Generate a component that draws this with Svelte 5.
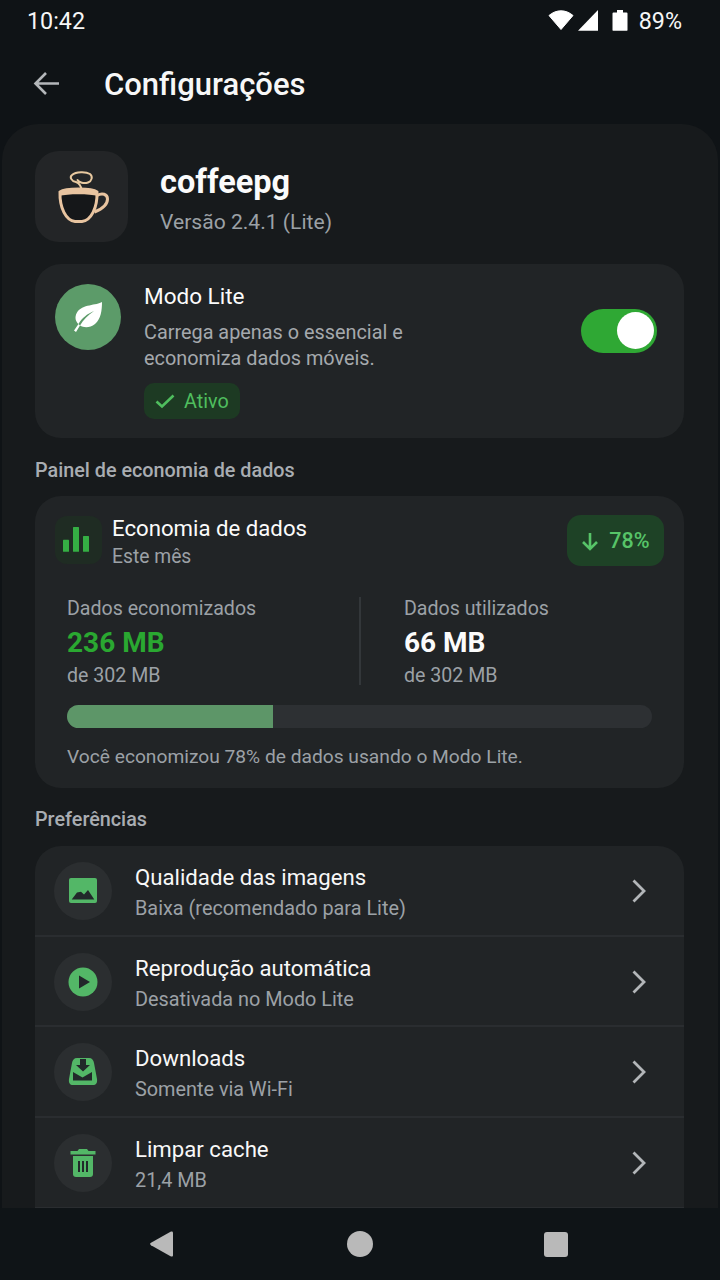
<script>
  const prefs = [
    { title: 'Qualidade das imagens', sub: 'Baixa (recomendado para Lite)', icon: 'image' },
    { title: 'Reprodução automática', sub: 'Desativada no Modo Lite', icon: 'play' },
    { title: 'Downloads', sub: 'Somente via Wi-Fi', icon: 'download' },
    { title: 'Limpar cache', sub: '21,4 MB', icon: 'trash' }
  ];
</script>

<div class="screen">
  <div class="status">
    <span class="time">10:42</span>
    <div class="status-right">
      <svg class="wifi" width="26" height="22" viewBox="0 1 26 22"><path d="M1 6.500C4.500 3.500 8.500 1.800 13 1.800S21.500 3.500 25 6.500L13 20.500Z" fill="#fff" stroke="#fff" stroke-linejoin="round"/></svg>
      <svg class="signal" width="22" height="22" viewBox="0 0 22 22"><path d="M21 0V20.700H1Z" fill="#fff"/></svg>
      <svg class="battery" width="16" height="22" viewBox="0 0 16 22"><path d="M5 0H11V2.500H14.500A1 1 0 0 1 15.500 3.500V20.200A.6.6 0 0 1 15 20.700H1A.6.6 0 0 1 .5 20.200V3.500A1 1 0 0 1 1.500 2.500H5Z" fill="#fff"/></svg>
      <span class="pct">89%</span>
    </div>
  </div>

  <header class="appbar">
    <svg width="28" height="28" viewBox="0 0 28 28" fill="none" stroke="#b4b7ba" stroke-width="2.600"><path d="M26 14.500H3M13 4 2.500 14.500 13 25"/></svg>
    <h1>Configurações</h1>
  </header>

  <main class="sheet">
    <section class="identity">
      <div class="tile">
        <svg width="60" height="60" viewBox="0 0 60 60" fill="none">
          <path d="M30 24C29 18 27 16 24 15C19 14 17.500 10 20 8C24 4.500 34 4.500 38 7C41 9.500 40 14 36 15.500C32 17 27 15.500 25.500 13" stroke="#e8c9a0" stroke-width="2" stroke-linecap="round"/>
          <path d="M8 25C11 22.800 19 22 27 22C35 22 42 22.800 45 25C45.500 41 39 53.500 30 54.500H23C14 53.500 7.500 41 8 25Z" fill="#151719" stroke="#e8c4a0" stroke-width="3"/>
          <path d="M7 25C10 22 19 21.500 27 21.500C35 21.500 43 22 46 25L45.500 29C38 26.800 15 26.800 7.500 29Z" fill="#e8c4a0"/>
          <path d="M45 28.500C50 25.500 55.500 27 55.500 32C55.500 38 49 42.500 42.500 45" stroke="#e8c4a0" stroke-width="3"/>
        </svg>
      </div>
      <div class="id-text">
        <div class="app-name">coffeepg</div>
        <div class="version">Versão 2.4.1 (Lite)</div>
      </div>
    </section>

    <section class="card lite">
      <div class="leaf">
        <svg width="36" height="36" viewBox="0 0 36 36"><path d="M32 3C27 6.500 12 5 7 13.500C4 18.500 6 23 8.500 25C12 19 17 15 24 12C18 16 13 21 10 26.500C14 29 20 29 25 25C31 20 32 11 32 3ZM8.500 25 4 31.500 6 33 10 26.500Z" fill="#fff"/></svg>
      </div>
      <div class="lite-text">
        <div class="card-title">Modo Lite</div>
        <p>Carrega apenas o essencial e<br />economiza dados móveis.</p>
        <div class="active">
          <svg width="20" height="20" viewBox="0 0 20 20" fill="none" stroke="#4fbe5e" stroke-width="2.600"><path d="M1.500 10.500 7 15.500 18.500 4.500"/></svg>
          <span>Ativo</span>
        </div>
      </div>
      <div class="switch"><span class="knob"></span></div>
    </section>

    <h2>Painel de economia de dados</h2>

    <section class="card savings">
      <div class="sv-head">
        <div class="bars">
          <svg width="26" height="28" viewBox="0 0 26 28" fill="#35ae44"><rect x="0" y="13.700" width="6" height="12" rx=".5"/><rect x="10" y="1" width="6" height="24.700" rx=".5"/><rect x="20" y="10" width="6" height="15.700" rx=".5"/></svg>
        </div>
        <div class="sv-title">
          <div class="card-title econ">Economia de dados</div>
          <div class="small">Este mês</div>
        </div>
        <div class="saved-badge">
          <svg width="18" height="20" viewBox="0 0 18 20" fill="none" stroke="#57c468" stroke-width="2.600"><path d="M9 2V18M2 11 9 18 16 11"/></svg>
          <span>78%</span>
        </div>
      </div>
      <div class="stats">
        <div class="stat left">
          <div class="label">Dados economizados</div>
          <div class="value green">236 MB</div>
          <div class="label">de 302 MB</div>
        </div>
        <div class="stat right">
          <div class="label">Dados utilizados</div>
          <div class="value">66 MB</div>
          <div class="label">de 302 MB</div>
        </div>
      </div>
      <div class="track"><div class="fill"></div></div>
      <div class="label note">Você economizou 78% de dados usando o Modo Lite.</div>
    </section>

    <h2 class="second">Preferências</h2>

    <section class="card list">
      {#each prefs as p}
        <div class="row">
          <div class="circle">
            {#if p.icon === 'image'}
              <svg width="28" height="25" viewBox="0 0 28 25"><rect width="28" height="25" rx="2" fill="#53b767"/><path d="M2.700 21.500 8 14.500 12 13.700 15 16.500 19 12 25.300 21.500Z" fill="#22282a"/></svg>
            {:else if p.icon === 'play'}
              <svg width="30" height="30" viewBox="0 0 30 30"><circle cx="15" cy="15" r="14.500" fill="#53b767"/><path d="M11 8.500 22 15 11 21.500Z" fill="#22282a"/></svg>
            {:else if p.icon === 'download'}
              <svg width="30" height="30" viewBox="0 0 30 30"><path d="M9 1H21C24 1 25.500 3 26 6L29 22C29.500 26 28 28 25 28H5C2 28 .5 26 1 22L4 6C4.500 3 6 1 9 1Z" fill="#53b767"/><path d="M12 2H18V8H22L15 14.500 8 8H12Z" fill="#22282a"/><path d="M5 15 14.500 20.500 24 15V23.500H5Z" fill="#22282a"/></svg>
            {:else}
              <svg width="28" height="30" viewBox="0 0 28 30"><path d="M10 1H18L19.500 3H26.500V6.500H1.500V3H8.500Z" fill="#53b767"/><path d="M4 8H24V26C24 28 23 29 21 29H7C5 29 4 28 4 26Z" fill="#53b767"/><path d="M9 13H11V24H9ZM13 13H15V24H13ZM17 13H19V24H17Z" fill="#22282a"/></svg>
            {/if}
          </div>
          <div class="row-text">
            <div class="row-title">{p.title}</div>
            <div class="row-sub">{p.sub}</div>
          </div>
          <svg class="chev" width="16" height="24" viewBox="0 0 16 24" fill="none" stroke="#b3b6b9" stroke-width="2.800"><path d="M2.500 1.500 13 12 2.500 22.500"/></svg>
        </div>
      {/each}
    </section>
  </main>

  <nav class="navbar">
    <svg width="23" height="26" viewBox="0 0 23 26"><path d="M20.500 .8 1 11.800C-.2 12.600-.2 13.400 1 14.200L20.500 25.200C22 26 23 25.500 23 24V2C23 .5 22 0 20.500 .8Z" fill="#b9b9b9"/></svg>
    <svg class="home" width="26" height="26" viewBox="0 0 26 26"><circle cx="13" cy="13" r="13" fill="#b9b9b9"/></svg>
    <svg width="24" height="25" viewBox="0 0 24 25"><rect width="24" height="25" rx="3" fill="#b9b9b9"/></svg>
  </nav>
</div>

<style>
  :global(body) {
    margin: 0;
    background: #0f1316;
  }
  .screen {
    width: 720px;
    height: 1280px;
    overflow: hidden;
    position: relative;
    background: #0f1316;
    color: #fff;
    font-family: Roboto, "Liberation Sans", sans-serif;
  }
  .status {
    height: 42px;
    box-sizing: border-box;
    padding: 0 38px 0 27px;
    display: flex;
    align-items: center;
    justify-content: space-between;
    font-size: 23.300px;
    color: #f6f6f6;
  }
  .status-right {
    display: flex;
    align-items: center;
  }
  .signal { margin-left: 3px; }
  .battery { margin-left: 13px; }
  .pct { margin-left: 11px; }
  .appbar {
    height: 82px;
    box-sizing: border-box;
    padding: 0 0 0 33px;
    display: flex;
    align-items: center;
  }
  h1 {
    margin: 2px 0 0 43px;
    font-size: 31px;
    font-weight: 500;
    color: #f7f7f7;
  }
  .sheet {
    height: 1084px;
    box-sizing: border-box;
    margin: 0 2px 0 2px;
    padding: 27px 33px 0;
    background: #171a1c;
    border-radius: 36px 36px 0 0;
  }
  .identity {
    height: 91px;
    display: flex;
    align-items: center;
  }
  .tile {
    width: 93px;
    height: 91px;
    border-radius: 24px;
    background: #232527;
    display: flex;
    align-items: center;
    justify-content: center;
  }
  .id-text {
    margin-left: 32px;
    margin-top: 4px;
  }
  .app-name {
    font-size: 32.500px;
    font-weight: 700;
    line-height: 40px;
    color: #fbfbfb;
  }
  .version {
    margin-top: 7px;
    font-size: 21.100px;
    line-height: 26px;
    color: #9ca1a6;
  }
  .card {
    width: 649px;
    box-sizing: border-box;
    background: #212426;
    border-radius: 26px;
  }
  .lite {
    margin-top: 22px;
    height: 174px;
    padding: 20px 27px 0 20px;
    display: flex;
    align-items: flex-start;
  }
  .leaf {
    width: 66px;
    height: 66px;
    border-radius: 50%;
    background: #5c9b69;
    display: flex;
    align-items: center;
    justify-content: center;
    flex: none;
  }
  .lite-text {
    margin: -1px 0 0 23px;
    flex: 1;
  }
  .card-title {
    font-size: 22.500px;
    line-height: 27px;
    color: #fbfbfb;
  }
  .card-title.econ { font-size: 22.200px; }
  .lite p {
    margin: 9.500px 0 0;
    font-size: 19.850px;
    line-height: 26.500px;
    color: #a5a9ad;
  }
  .active {
    margin-top: 10.500px;
    width: 96px;
    height: 36px;
    border-radius: 10px;
    background: #1d3a23;
    display: flex;
    align-items: center;
    gap: 9px;
    padding-left: 11px;
    box-sizing: border-box;
    font-size: 19.800px;
    color: #4fbe5e;
  }
  .switch {
    margin-top: 25px;
    width: 76px;
    height: 44px;
    border-radius: 22px;
    background: #2fa834;
    position: relative;
    flex: none;
  }
  .knob {
    position: absolute;
    right: 3px;
    top: 3px;
    width: 37px;
    height: 37px;
    border-radius: 50%;
    background: #fff;
  }
  h2 {
    margin: 21px 0 0;
    height: 37px;
    font-size: 19.800px;
    font-weight: 500;
    line-height: 23px;
    color: #a9adb2;
  }
  h2.second { margin-top: 20px; height: 38px; }
  .savings {
    height: 292px;
    padding: 19px 20px 0;
  }
  .sv-head {
    display: flex;
    align-items: flex-start;
  }
  .bars {
    width: 47px;
    height: 48px;
    margin-top: 1px;
    border-radius: 12px;
    background: #1f2c23;
    display: flex;
    align-items: center;
    justify-content: center;
    padding-right: 5px;
    box-sizing: border-box;
    flex: none;
  }
  .sv-title {
    margin-left: 10px;
    flex: 1;
  }
  .small {
    margin-top: 1px;
    font-size: 19.300px;
    line-height: 27px;
    color: #9ca1a6;
  }
  .saved-badge {
    width: 97px;
    height: 51px;
    border-radius: 14px;
    background: #1e4226;
    display: flex;
    align-items: center;
    justify-content: center;
    gap: 10px;
    color: #57c468;
    font-size: 21.500px;
    font-weight: 500;
  }
  .stats {
    display: flex;
    margin: 27px 0 0 12px;
    height: 88px;
  }
  .stat { width: 292px; }
  .stat.right {
    border-left: 2px solid #33373a;
    padding-left: 43px;
    box-sizing: border-box;
    width: 300px;
  }
  .label {
    font-size: 19.600px;
    line-height: 24px;
    color: #9ca1a6;
  }
  .value {
    margin-top: 1px;
    font-size: 28px;
    font-weight: 700;
    line-height: 42px;
    color: #fbfbfb;
  }
  .value.green { color: #2aa831; }
  .track {
    margin: 20px 12px 0;
    height: 23px;
    border-radius: 12px;
    background: #2d3033;
    overflow: hidden;
    width: 585px;
  }
  .fill {
    width: 35.200%;
    height: 100%;
    background: #5d9668;
  }
  .note {
    margin: 17px 0 0 12px;
    font-size: 19.200px;
  }
  .list {
    border-radius: 26px 26px 0 0;
  }
  .row {
    height: 90.700px;
    box-sizing: border-box;
    border-bottom: 2px solid #2a2d30;
    padding: 1px 37px 0 19px;
    display: flex;
    align-items: center;
  }
  .circle {
    width: 58px;
    height: 58px;
    border-radius: 50%;
    background: #2b2e30;
    display: flex;
    align-items: center;
    justify-content: center;
    flex: none;
  }
  .row-text {
    margin-left: 23px;
    padding-top: 3px;
    flex: 1;
  }
  .row-title {
    font-size: 22.200px;
    line-height: 28px;
    color: #f8f8f8;
  }
  .row-sub {
    margin-top: 5px;
    font-size: 19.850px;
    line-height: 26px;
    color: #9ca1a6;
  }
  .navbar {
    position: absolute;
    left: 0;
    right: 0;
    bottom: 0;
    height: 72px;
    background: #0f1417;
    display: flex;
    align-items: center;
    padding: 0 152px 0 150px;
    justify-content: space-between;
    box-sizing: border-box;
  }
  .home { margin-left: 3px; }
</style>
